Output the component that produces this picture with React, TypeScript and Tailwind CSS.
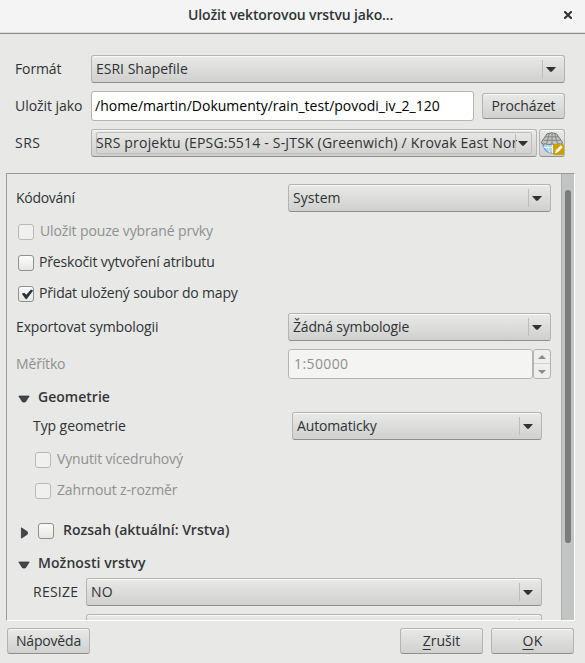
import type { ReactNode } from "react";

type BoxProps = { className?: string; children?: ReactNode };

const surface =
  "border border-[#b4b4b1] border-b-[#8f8f8c] rounded-[3px] bg-linear-to-b from-[#e9e9e7] to-[#d0d0ce] shadow-[inset_0_1px_0_#f8f8f7]";

function DownArrow({ className = "" }: { className?: string }) {
  return (
    <svg width="10" height="5" viewBox="0 0 10 5" className={`shrink-0 ${className}`}>
      <path d="M0 0H10L6 4.4Q5 5.2 4 4.4Z" fill="#2e3436" />
    </svg>
  );
}

function Combo({ className = "", children }: BoxProps) {
  return (
    <div className={`flex h-7 shrink-0 items-center pl-1 ${surface} ${className}`}>
      <span className="flex-1 overflow-hidden whitespace-nowrap leading-[26px]">{children}</span>
      <span className="mr-[3px] h-[18px] w-px bg-[#bdbdbb]" />
      <DownArrow className="mr-[8px] mt-px" />
    </div>
  );
}

function Button({ className = "", children }: BoxProps) {
  return (
    <div className={`h-[26px] shrink-0 whitespace-nowrap text-center leading-[24px] ${surface} ${className}`}>
      {children}
    </div>
  );
}

function Check({ disabled = false, checked = false, className = "" }: { disabled?: boolean; checked?: boolean; className?: string }) {
  return (
    <span
      className={`block h-4 w-4 shrink-0 rounded-[3px] border ${
        disabled ? "border-[#b9b9b7] bg-[#f0f0ef]" : "border-[#8f918e] bg-linear-to-b from-[#fbfbfb] to-[#e6e6e5]"
      } ${className}`}
    >
      {checked && (
        <svg width="14" height="14" viewBox="0 0 14 14">
          <path d="M2.8 6.8L5.2 5.8L7.3 7.8L12 2.4L14.2 3.6L8 11.8Q7.3 12.6 6.4 11.8Z" fill="#2e3436" />
        </svg>
      )}
    </span>
  );
}

function GlobeIcon() {
  return (
    <svg width="24" height="24" viewBox="0 0 24 24" className="shrink-0">
      <path d="M2.5 11H21Q21 17 17 20.5Q11.5 24 6 20Q2.5 17 2.5 11Z" fill="#a9d2f3" stroke="#5b91bd" />
      <path d="M7.5 12Q8 18 10 22M12.5 12V22M3.5 16.5H19" fill="none" stroke="#e8f4fd" strokeWidth="1" />
      <path d="M7 2.8Q12 0.8 16.5 2.8L22.8 11.8Q21 14 18.6 12.8Q15 14.4 12 13Q8.6 14.4 5.4 12.8Q3 14 1 11.8Z" fill="#c3c5c3" stroke="#737774" />
      <path d="M5.5 5.8H18.5M3.5 9.3H20.5M9.3 2.5L6.5 12.8M12 2V12.8M14.7 2.5L17.5 12.8" fill="none" stroke="#7c807c" strokeWidth=".9" />
      <rect x="13" y="13" width="11" height="11" rx="1.5" fill="#c9a000" />
      <path d="M15 22.2L15.9 19.2L20.8 14.3L22.7 16.2L17.9 21.2Z" fill="#fff" />
    </svg>
  );
}

function Expander({ open = false, className = "" }: { open?: boolean; className?: string }) {
  return (
    <svg width="12" height="12" viewBox="0 0 12 12" className={`shrink-0 ${className}`}>
      <path d={open ? "M0.8 3H11.2L7.4 9H4.6Z" : "M3.4 .8L9.4 4.8V7.2L3.4 11.2Z"} fill="#434749" stroke="#2b2e30" strokeWidth=".7" />
    </svg>
  );
}

export default function App() {
  return (
    <div className="flex h-[663px] w-[585px] flex-col overflow-hidden bg-[#e8e8e6] font-['Open_Sans','Noto_Sans',sans-serif] text-[14px] leading-5 text-[#2e3436]">
      <header className="flex h-[34px] shrink-0 items-center border-b border-[#8c8c8a] bg-[#f4f4f4] pl-[188px] shadow-[inset_0_-1px_0_#dcdcdb]">
        <h1 className="w-[206px] whitespace-nowrap pb-[3px] text-[14px] font-semibold leading-[30px] tracking-[-0.13px]">Uložit vektorovou vrstvu jako...</h1>
        <svg width="8" height="8" viewBox="0 0 8 8" className="-mt-1 ml-[170px]">
          <path d="M1 1L7 7M7 1L1 7" stroke="#2e3436" strokeWidth="2.1" strokeLinecap="square" />
        </svg>
      </header>

      <section className="shrink-0 pt-[21px] pl-[15px]">
        <div className="flex h-7 items-center">
          <span className="w-[76px] tracking-[-0.13px]">Formát</span>
          <Combo className="w-[474px]">ESRI Shapefile</Combo>
        </div>
        <div className="mt-2 flex h-[30px] items-center">
          <span className="w-[76px] whitespace-nowrap tracking-[-0.05px]">Uložit jako</span>
          <div className="h-[30px] w-[383px] rounded-[3px] border border-[#b4b4b1] bg-white pl-[3px] leading-[28px] text-black">
            /home/martin/Dokumenty/rain_test/povodi_iv_2_120
          </div>
          <Button className="ml-2 w-[83px] tracking-[-0.117px]">Procházet</Button>
        </div>
        <div className="mt-2 flex h-7 items-center">
          <span className="w-[76px] tracking-[0.5px]">SRS</span>
          <div className={`flex h-7 w-[446px] p-[2px] pl-1 pr-1 ${surface}`}>
            <div className="flex w-full items-center rounded-[2px] border border-[#bdbdbb]">
              <span className="-ml-px w-[421px] overflow-hidden whitespace-nowrap leading-[22px] tracking-[0.185px]">
                SRS projektu (EPSG:5514 - S-JTSK (Greenwich) / Krovak East Nor
              </span>
              <span className="-ml-[2px] h-[18px] w-px bg-[#bdbdbb]" />
              <DownArrow className="ml-[2px] mt-px" />
            </div>
          </div>
          <div className={`ml-[2px] flex h-7 w-[26px] items-center justify-center ${surface}`}>
            <GlobeIcon />
          </div>
        </div>
      </section>

      <main className="mt-4 ml-[6px] flex h-[448px] w-[569px] shrink-0 overflow-hidden border border-t-[#9b9b99] border-l-[#9b9b99] border-r-white border-b-white">
        <div className="flex h-[446px] w-[554px] flex-col overflow-hidden pt-[10px] pl-[9px]">
          <div className="flex h-7 shrink-0 items-center">
            <span className="w-[272px] tracking-[-0.28px]">Kódování</span>
            <Combo className="w-[263px] tracking-[0.08px]">System</Combo>
          </div>
          <div className="mt-3 ml-[2px] flex h-4 shrink-0 items-center gap-[6px] text-[#8f9190]">
            <Check disabled />
            <span className="-mt-[3px] tracking-[-0.13px]">Uložit pouze vybrané prvky</span>
          </div>
          <div className="mt-[15px] ml-[2px] flex h-4 shrink-0 items-center gap-[6px]">
            <Check />
            <span className="-mt-[3px] -ml-px tracking-[-0.15px]">Přeskočit vytvoření atributu</span>
          </div>
          <div className="mt-[15px] ml-[2px] flex h-4 shrink-0 items-center gap-[6px]">
            <Check checked />
            <span className="-mt-[3px] -ml-px tracking-[-0.18px]">Přidat uložený soubor do mapy</span>
          </div>
          <div className="mt-[11px] flex h-7 shrink-0 items-center">
            <span className="w-[272px] tracking-[-0.12px]">Exportovat symbologii</span>
            <Combo className="w-[263px] tracking-[-0.18px]">Žádná symbologie</Combo>
          </div>
          <div className="mt-2 flex h-[30px] shrink-0 items-center text-[#8f9190]">
            <span className="w-[272px] tracking-[-0.16px]">Měřítko</span>
            <div className="h-[30px] w-[245px] rounded-[3px] border border-[#b4b4b1] bg-[#f4f4f2] pl-[5px] leading-[28px] tracking-[0.4px]">1:50000</div>
            <div className="flex h-[30px] w-[18px] flex-col rounded-[3px] border border-[#b4b4b1] bg-[#eeeeed]">
              <span className="flex flex-1 items-center justify-center border-b border-[#d2d2d0]">
                <svg width="8" height="4" viewBox="0 0 8 4"><path d="M0 4L4 0L8 4Z" fill="#8b8e8c" /></svg>
              </span>
              <span className="flex flex-1 items-center justify-center pt-px">
                <svg width="8" height="4" viewBox="0 0 8 4"><path d="M0 0L4 4L8 0Z" fill="#8b8e8c" /></svg>
              </span>
            </div>
          </div>
          <div className="mt-[7px] flex h-5 shrink-0 items-center pl-[2px] font-semibold text-[#343739]">
            <Expander open className="mt-[5px]" />
            <span className="mt-[2px] ml-2 tracking-[0.02px]">Geometrie</span>
          </div>
          <div className="mt-[6px] flex h-7 shrink-0 items-center pl-[17px]">
            <span className="w-[259px] tracking-[-0.08px]">Typ geometrie</span>
            <Combo className="w-[250px] tracking-[-0.15px]">Automaticky</Combo>
          </div>
          <div className="mt-3 ml-[19px] flex h-4 shrink-0 items-center gap-[6px] text-[#8f9190]">
            <Check disabled />
            <span className="-mt-[3px] tracking-[-0.15px]">Vynutit vícedruhový</span>
          </div>
          <div className="mt-[15px] ml-[19px] flex h-4 shrink-0 items-center gap-[6px] text-[#8f9190]">
            <Check disabled />
            <span className="-mt-[3px] tracking-[-0.14px]">Zahrnout z-rozměr</span>
          </div>
          <div className="mt-6 flex h-4 shrink-0 items-center pl-[2px] font-semibold text-[#343739]">
            <Expander className="mt-[3px]" />
            <Check className="ml-2" />
            <span className="-mt-[3px] ml-[9px] tracking-[0.01px]">Rozsah (aktuální: Vrstva)</span>
          </div>
          <div className="mt-[14px] flex h-5 shrink-0 items-center pl-[2px] font-semibold text-[#343739]">
            <Expander open className="mt-[4px]" />
            <span className="-mt-px ml-2 tracking-[0.08px]">Možnosti vrstvy</span>
          </div>
          <div className="mt-[5px] flex h-7 shrink-0 items-center pl-[17px]">
            <span className="w-[53px] tracking-[0.25px]">RESIZE</span>
            <Combo className="w-[456px] tracking-[0.3px]">NO</Combo>
          </div>
          <div className="mt-2 flex h-7 shrink-0 items-center pl-[70px]">
            <Combo className="w-[456px]" />
          </div>
        </div>
        <div className="h-[446px] w-[13px] border-l border-[#adafad] bg-[#c2c4c3] pt-4 pl-[3px]">
          <div className="h-[353px] w-[6px] rounded-full bg-[#7a7c7c]" />
        </div>
      </main>

      <footer className="mt-[7px] flex shrink-0 pl-[7px]">
        <Button className="w-[83px] tracking-[-0.188px]">Nápověda</Button>
        <Button className="ml-[310px] w-[83px]">
          <span className="underline decoration-1 underline-offset-[3px]">Z</span>rušit
        </Button>
        <Button className="ml-2 w-[83px] tracking-[0.3px]">
          <span className="underline decoration-1 underline-offset-[3px]">O</span>K
        </Button>
      </footer>
    </div>
  );
}
